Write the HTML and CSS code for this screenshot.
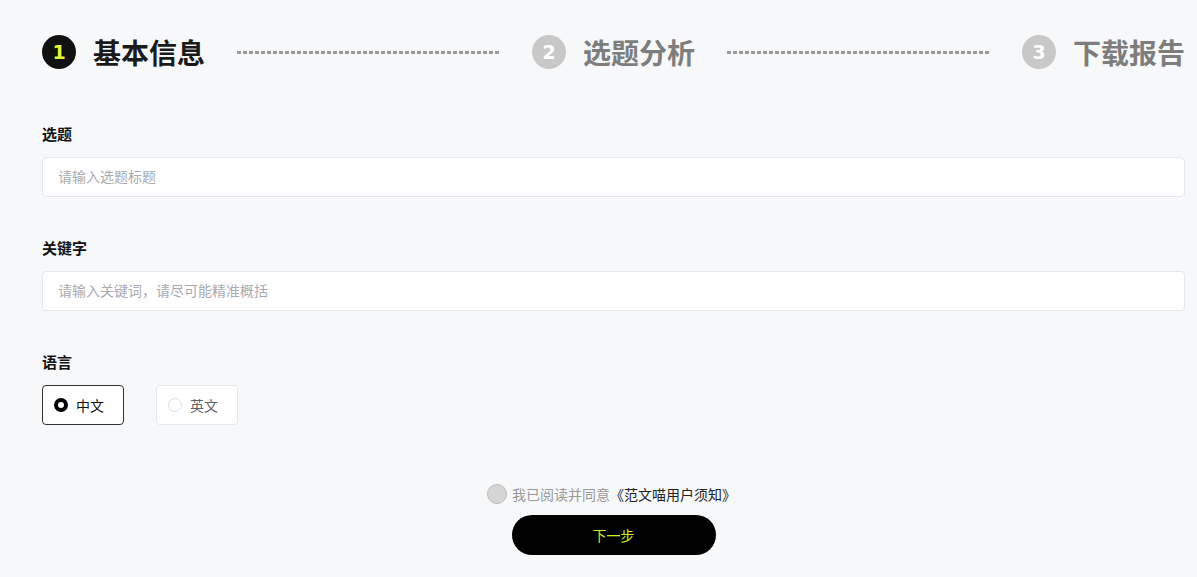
FILE: index.html
```html
<!DOCTYPE html>
<html lang="zh-CN">

<head>
    <meta charset="UTF-8">
    <meta name="viewport" content="width=device-width, initial-scale=1.0">
    <title>基本信息</title>
    <link rel="stylesheet" href="styles.css">
</head>

<body>
    <div class="page">
        <div class="steps">
            <div class="step active">
                <span class="num">1</span>
                <span class="title">基本信息</span>
            </div>
            <div class="line"></div>
            <div class="step">
                <span class="num">2</span>
                <span class="title">选题分析</span>
            </div>
            <div class="line"></div>
            <div class="step">
                <span class="num">3</span>
                <span class="title">下载报告</span>
            </div>
        </div>

        <div class="form">
            <div class="field">
                <label class="label">选题</label>
                <input class="input" type="text" placeholder="请输入选题标题">
            </div>
            <div class="field">
                <label class="label">关键字</label>
                <input class="input" type="text" placeholder="请输入关键词，请尽可能精准概括">
            </div>
            <div class="field">
                <label class="label">语言</label>
                <div class="radios">
                    <div class="radio checked"><span class="dot"></span>中文</div>
                    <div class="radio"><span class="dot"></span>英文</div>
                </div>
            </div>
        </div>

        <div class="footer">
            <div class="agree">
                <span class="check"></span>
                <span class="gray">我已阅读并同意</span><span class="link">《范文喵用户须知》</span>
            </div>
            <button class="next">下一步</button>
        </div>
    </div>
</body>

</html>
```

FILE: styles.css
```css
* {
    margin: 0;
    padding: 0;
    box-sizing: border-box;
}

body {
    background: #f7f8fa;
    font-family: "Noto Sans CJK SC", "Liberation Sans", sans-serif;
    color: #222;
}

.page {
    width: 1143px;
    margin-left: 42px;
    padding-top: 35px;
}

.steps {
    display: flex;
    align-items: center;
    height: 34px;
}

.step {
    display: flex;
    align-items: center;
    gap: 17px;
}

.step .num {
    width: 34px;
    height: 34px;
    border-radius: 50%;
    background: #c8c8c8;
    color: #fff;
    font-family: "DejaVu Sans", sans-serif;
    font-weight: bold;
    font-size: 19px;
    display: flex;
    align-items: center;
    justify-content: center;
}

.step .title {
    font-size: 28px;
    font-weight: bold;
    color: #7d7d7d;
    line-height: 34px;
}

.step.active .num {
    background: #111;
    color: #e4f43a;
}

.step.active .title {
    color: #1a1a1a;
}

.line {
    flex: 1;
    height: 3px;
    margin: 0 32px;
    background: repeating-linear-gradient(to right, #9a9a9a 0, #9a9a9a 4px, transparent 4px, transparent 6px);
}

.form {
    margin-top: 55px;
}

.field {
    margin-bottom: 41px;
}

.field:last-child {
    margin-bottom: 0;
}

.label {
    display: block;
    font-size: 15px;
    font-weight: bold;
    line-height: 20px;
    color: #111;
    margin-bottom: 13px;
}

.input {
    display: block;
    width: 100%;
    height: 40px;
    border: 1px solid #e4e7ed;
    border-radius: 4px;
    background: #fff;
    padding: 0 15px 2px;
    font-family: inherit;
    font-size: 14px;
    color: #333;
    outline: none;
}

.input::placeholder {
    color: #a8abb2;
}

.radios {
    display: flex;
    gap: 32px;
}

.radio {
    width: 82px;
    height: 40px;
    border: 1px solid #e4e7ed;
    border-radius: 4px;
    background: #fff;
    display: flex;
    align-items: center;
    padding-left: 11px;
    font-size: 14px;
    color: #606266;
}

.radio .dot {
    width: 14px;
    height: 14px;
    border-radius: 50%;
    border: 1px solid #dcdfe6;
    background: #fff;
    margin-right: 8px;
}

.radio.checked {
    border-color: #333;
    color: #111;
}

.radio.checked .dot {
    border: 4px solid #000;
}

.footer {
    margin-top: 59px;
    display: flex;
    flex-direction: column;
    align-items: center;
}

.agree {
    display: flex;
    align-items: center;
    font-size: 14px;
    line-height: 20px;
    margin-left: -4px;
}

.agree .check {
    width: 20px;
    height: 20px;
    border-radius: 50%;
    background: #d6d6d6;
    border: 1px solid #bcbcbc;
    margin-right: 5px;
}

.agree .gray {
    color: #999;
}

.agree .link {
    color: #222;
}

.next {
    margin-top: 11px;
    width: 204px;
    height: 40px;
    border: none;
    border-radius: 20px;
    background: #000;
    color: #c8f020;
    font-family: inherit;
    font-size: 14px;
    cursor: pointer;
}
```
